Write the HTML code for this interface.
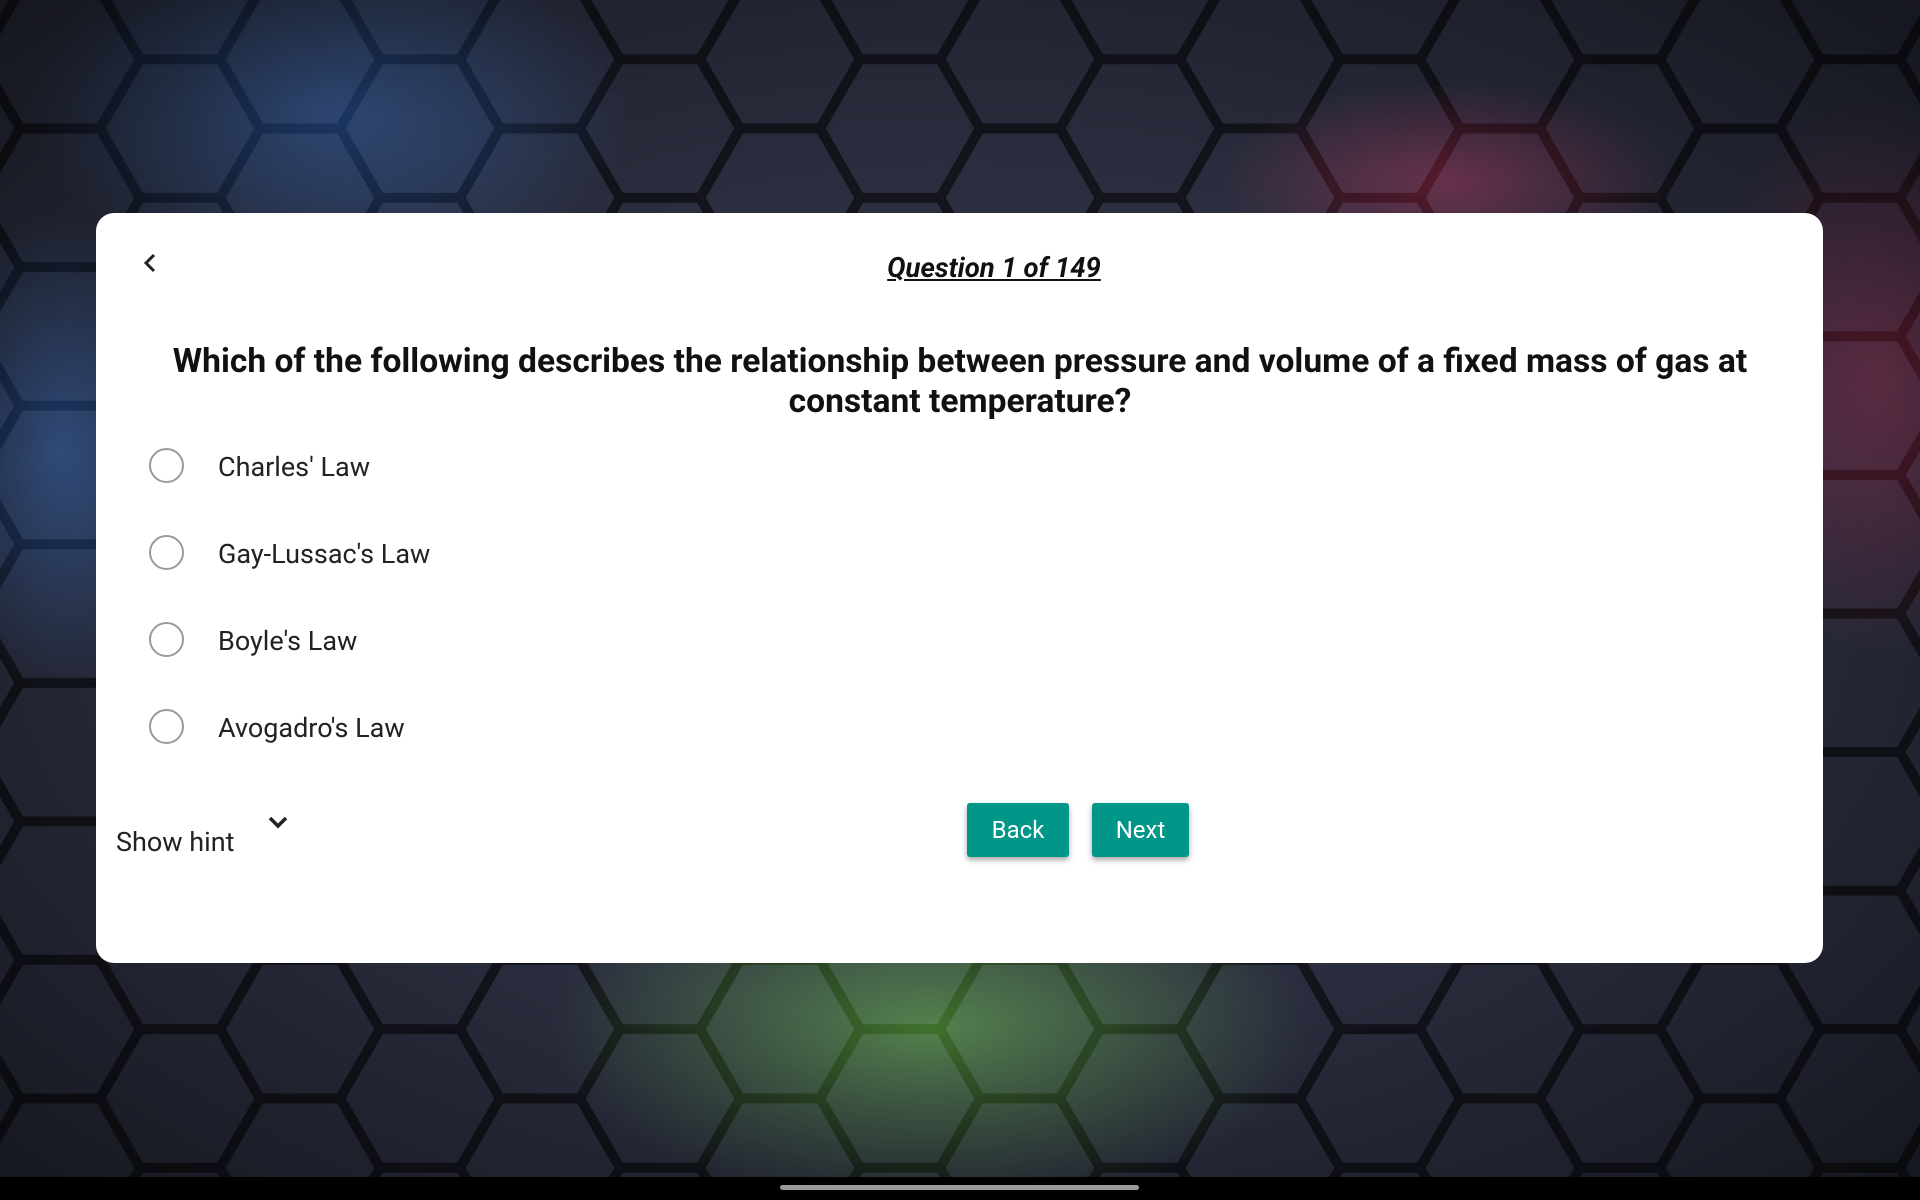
<!DOCTYPE html>
<html><head><meta charset="utf-8"><style>
html,body{margin:0;padding:0;width:1920px;height:1200px;overflow:hidden;background:#1b1d28;font-family:"Roboto","Liberation Sans",sans-serif}
#bg{position:absolute;left:0;top:0}
.card{position:absolute;left:96px;top:213px;width:1727px;height:750px;background:#fff;border-radius:18px}
.title{position:absolute;left:68px;right:0;top:251px;text-align:center;font-size:27.5px;font-weight:bold;font-style:italic;text-decoration:underline;color:#111}
.q{position:absolute;left:110px;right:110px;top:342px;text-align:center;font-size:33.6px;line-height:40px;font-weight:bold;color:#111}
.opt{position:absolute;left:149px;height:36px;font-size:27px;color:#222;line-height:36px}
.opt i{position:absolute;left:0;top:0;width:31px;height:31px;border:2.5px solid #9a9a9a;border-radius:50%}
.opt span{position:absolute;left:69px;top:1px;white-space:nowrap}
.btn{position:absolute;top:803px;height:54px;background:#009688;color:#fff;font-size:24px;line-height:54px;text-align:center;border-radius:3px;box-shadow:0 3px 6px rgba(0,0,0,.35)}
.hint{position:absolute;left:116px;top:826px;font-size:27px;color:#222}
.bar{position:absolute;left:0;top:1177px;width:1920px;height:23px;background:#000}
.home{position:absolute;left:780px;top:1185px;width:359px;height:5px;border-radius:3px;background:#9a9a9a}
</style></head><body>
<svg id="bg" width="1920" height="1200">
<defs>
<pattern id="hx" width="240" height="138.56" patternUnits="userSpaceOnUse" x="-20" y="-10">
<g fill="#2b2e3f" stroke="#13141c" stroke-width="10">
<polygon points="0,69.28 40,0 120,0 160,69.28 120,138.56 40,138.56"/>
<polygon points="120,0 160,-69.28 240,-69.28 280,0 240,69.28 160,69.28"/>
<polygon points="120,138.56 160,69.28 240,69.28 280,138.56 240,207.85 160,207.85"/>
<polygon points="-120,0 -80,-69.28 0,-69.28 40,0 0,69.28 -80,69.28"/>
<polygon points="-120,138.56 -80,69.28 0,69.28 40,138.56 0,207.85 -80,207.85"/>
</g>
</pattern>
<radialGradient id="gb" cx="0.5" cy="0.5" r="0.5"><stop offset="0" stop-color="#2a7dff" stop-opacity=".45"/><stop offset="1" stop-color="#2a7dff" stop-opacity="0"/></radialGradient>
<radialGradient id="gr" cx="0.5" cy="0.5" r="0.5"><stop offset="0" stop-color="#ff2050" stop-opacity=".35"/><stop offset="1" stop-color="#ff2050" stop-opacity="0"/></radialGradient>
<radialGradient id="gg" cx="0.5" cy="0.5" r="0.5"><stop offset="0" stop-color="#7dff30" stop-opacity=".4"/><stop offset="1" stop-color="#7dff30" stop-opacity="0"/></radialGradient>
<radialGradient id="vg" cx="0.5" cy="0.5" r="0.7"><stop offset="0.5" stop-color="#000" stop-opacity="0"/><stop offset="1" stop-color="#000" stop-opacity=".5"/></radialGradient>
</defs>
<rect width="1920" height="1200" fill="url(#hx)"/>
<ellipse cx="330" cy="110" rx="300" ry="180" fill="url(#gb)" style="mix-blend-mode:screen"/>
<ellipse cx="60" cy="450" rx="140" ry="240" fill="url(#gb)" style="mix-blend-mode:screen"/>
<ellipse cx="1880" cy="380" rx="200" ry="280" fill="url(#gr)" style="mix-blend-mode:screen"/>
<ellipse cx="1450" cy="180" rx="230" ry="100" fill="url(#gr)" style="mix-blend-mode:screen"/>
<ellipse cx="930" cy="1030" rx="380" ry="180" fill="url(#gg)" style="mix-blend-mode:screen"/>
<rect width="1920" height="1200" fill="url(#vg)"/>
</svg>
<div class="card"></div>
<svg style="position:absolute;left:140px;top:252px" width="22" height="22"><path d="M14 3 L6 11 L14 19" stroke="#222" stroke-width="3" fill="none"/></svg>
<div class="title">Question 1 of 149</div>
<div class="q">Which of the following describes the relationship between pressure and volume of a fixed mass of gas at constant temperature?</div>
<div class="opt" style="top:448px"><i></i><span>Charles' Law</span></div>
<div class="opt" style="top:535px"><i></i><span>Gay-Lussac's Law</span></div>
<div class="opt" style="top:622px"><i></i><span>Boyle's Law</span></div>
<div class="opt" style="top:709px"><i></i><span>Avogadro's Law</span></div>
<div class="hint">Show hint</div>
<svg style="position:absolute;left:266px;top:812px" width="24" height="20"><path d="M4 6 L12 14 L20 6" stroke="#222" stroke-width="3.5" fill="none"/></svg>
<div class="btn" style="left:967px;width:102px">Back</div>
<div class="btn" style="left:1092px;width:97px">Next</div>
<div class="bar"></div><div class="home"></div>
</body></html>
